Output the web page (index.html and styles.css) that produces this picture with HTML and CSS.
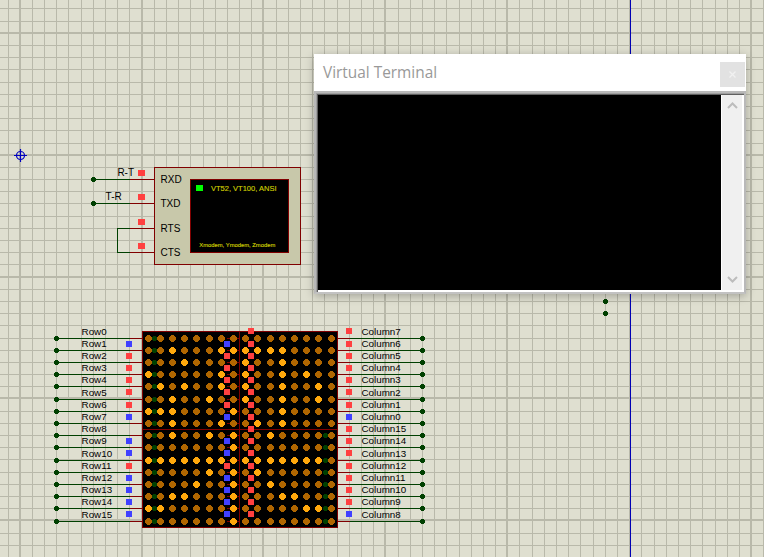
FILE: index.html
```html
<!DOCTYPE html>
<html lang="en">
<head>
<meta charset="utf-8">
<title>Virtual Terminal</title>
<link rel="stylesheet" href="styles.css">
</head>
<body>
<main class="workspace">
  <svg class="schematic" id="schematic" width="764" height="557" viewBox="0 0 764 557"></svg>
  <section class="window">
    <header class="titlebar">
      <h1 class="title">Virtual Terminal</h1>
      <button class="close" aria-label="Close"><svg width="9" height="9" viewBox="0 0 9 9"><path d="M1.5 1.5l6 6M7.5 1.5l-6 6"/></svg></button>
    </header>
    <div class="client">
      <div class="screen"></div>
      <div class="scrollbar">
        <svg width="11" height="9" viewBox="0 0 11 9"><path d="M1 7l4.5-4.5L10 7"/></svg>
        <svg width="11" height="9" viewBox="0 0 11 9"><path d="M1 2l4.5 4.5L10 2"/></svg>
      </div>
    </div>
  </section>
</main>
<script src="schematic.js"></script>
</body>
</html>
```
FILE: styles.css
```css
* { box-sizing: border-box; }
body { margin: 0; overflow: hidden; font-family: "Liberation Sans", Arial, sans-serif; }
.workspace { position: relative; width: 764px; height: 557px; overflow: hidden; background: #dfdfd0; }
.schematic { display: block; }
.schematic rect { shape-rendering: crispEdges; }
.grid { fill: #b9b9aa; }
.net { fill: #004000; }
.pin { fill: #800000; }
.guide { fill: #0000b4; }
.high { fill: #ff4040; }
.low { fill: #4040ff; }
.led { fill: #b06600; }
.lit { fill: #ffa80c; }
.panel { fill: #000; stroke: #800000; }
.device { fill: #c8c8aa; stroke: #800000; }
.active { fill: #00ff00; }
.origin { fill: none; stroke: #0000c0; stroke-width: 1.2; }
.label { fill: #000; font-size: 9.8px; }
.pinname { fill: #000; font-size: 10px; }
.crt { fill: #d2d200; stroke: #c8c800; stroke-width: .15px; font-size: 7.6px; }
.crt-small { fill: #d2d200; stroke: #c8c800; stroke-width: .15px; font-size: 6.2px; }

.window {
  position: absolute; left: 314px; top: 54px; width: 432px; height: 240px;
  display: flex; flex-direction: column; background: #fff;
  box-shadow: 0 2px 9px rgba(0, 0, 0, .28);
}
.titlebar { height: 37px; flex: none; display: flex; justify-content: space-between; align-items: flex-start; padding: 0 1px 0 9px; }
.title { margin: 0; font: 400 15.4px/38px "Open Sans", "Noto Sans", sans-serif; color: #999; }
.close { width: 25px; height: 25px; margin-top: 8px; padding: 0; border: 0; background: #e2e2e2; display: grid; place-items: center; }
.close path { stroke: #f1f1f1; stroke-width: 1.3; fill: none; }
.client { flex: 1; display: flex; border: 2px solid #b9b9b9; border-bottom-color: #c2c2c2; box-shadow: inset 1px 1px #a0a0a0, inset 2px 2px #606060, inset -1px -1px #fff; padding: 2px; }
.screen { flex: 1; background: #000; }
.scrollbar { width: 21px; background: #f0f0f0; border-left: 1px solid #fff; display: flex; flex-direction: column; justify-content: space-between; align-items: center; padding: 6px 0; }
.scrollbar path { fill: none; stroke: #bdbdbd; stroke-width: 2; }
```
FILE: schematic.js
```js
const NS = 'http://www.w3.org/2000/svg';
const root = document.getElementById('schematic');

function add(tag, cls, attrs, text) {
  const el = document.createElementNS(NS, tag);
  el.setAttribute('class', cls);
  for (const k in attrs) el.setAttribute(k, attrs[k]);
  if (text) el.textContent = text;
  root.appendChild(el);
}
const rect = (cls, x, y, width, height) => add('rect', cls, { x, y, width, height });
const label = (cls, x, y, text, textLength) =>
  add('text', cls, textLength ? { x, y, textLength, lengthAdjust: 'spacingAndGlyphs' } : { x, y }, text);
function node(x, y) {
  rect('net', x - 1, y - 2, 3, 5);
  rect('net', x - 2, y - 1, 5, 3);
}
function led(cls, x, y) {
  rect(cls, x - 1, y - 3, 3, 7);
  rect(cls, x - 2, y - 2, 5, 5);
  rect(cls, x - 3, y - 1, 7, 3);
}

// Grid: every tenth line is heavy; the guide replaces the one at x = 629
for (let k = -13; k < 62; k++) {
  const x = Math.floor(20.19 + 12.19 * k);
  const y = Math.floor(155.19 + 12.19 * k);
  const heavy = k % 10 === 0 ? 1 : 0;
  const heavyX = k === 50 ? 0 : heavy;
  rect('grid', x - heavyX, 0, 1 + heavyX, 557);
  rect('grid', 0, y - heavy, 764, 1 + heavy);
}
rect('guide', 630, 0, 1, 557);
add('path', 'origin', { d: 'M14 155.5h13M20.5 149v13' });
add('circle', 'origin', { cx: 20.5, cy: 155.5, r: 4 });
node(605, 301);
node(605, 313);

// Terminal device
rect('device', 154.5, 167.5, 146, 97);
rect('panel', 190.5, 179.5, 98, 73);
rect('active', 196, 185, 7, 6);
label('crt', 211, 191.3, 'VT52, VT100, ANSI', 65.5);
label('crt-small', 199.3, 247, 'Xmodem, Ymodem, Zmodem', 76);
[['RXD', 179], ['TXD', 203], ['RTS', 228], ['CTS', 252]].forEach(([name, y], i) => {
  const start = i < 2 ? 93 : 117;
  rect('net', start, y, 130 - start, 1);
  rect('pin', 130, y, 24, 1);
  rect('high', 138, y - 9, 7, 6);
  label('pinname', 160.5, y + 4, name);
});
rect('net', 117, 228, 1, 25);
node(93, 179);
node(93, 203);
label('pinname', 117.4, 176, 'R-T');
label('pinname', 105.6, 200, 'T-R');

// 16x16 LED matrix
const cols = [148, 160, 172, 184, 196, 209, 221, 233, 245, 257, 270, 282, 294, 306, 318, 331];
const rows = [338, 350, 362, 374, 386, 399, 411, 423, 435, 447, 460, 472, 484, 496, 508, 521];
const probes = [331, 344, 356, 368, 380, 392, 405, 417, 429, 441, 453, 466, 478, 490, 502, 514];
const columnOrder = [7, 6, 5, 4, 3, 2, 1, 0, 15, 14, 13, 12, 11, 10, 9, 8];
const rowState = '.brrrrrb.bbrbbbb';
const columnState = 'rrrrrrrbrrrrrrrb';
const bitmap = [
  '................',
  '..#...######....',
  '...#....#..#....',
  '#.....#.#..#.#..',
  '.#.#..#.#..#..#.',
  '..#..#..#..#..#.',
  '###....#...#....',
  '..#...#..#.#....',
  '..#..#.#..#.....',
  '.......#........',
  '###############.',
  '.....#.#.#......',
  '....#..#..#.....',
  '..##...#...##...',
  '##.....#.....##.',
  '.......#........'
];
function probe(x, y, s) {
  if (s !== '.') rect(s === 'r' ? 'high' : 'low', x - 3, y - 3, 6, 6);
}

rect('panel', 142.5, 331.5, 195, 196);
rect('pin', 239, 331, 1, 196);
rect('pin', 142, 429, 196, 1);
rows.forEach((y, r) => {
  rect('net', 56, y, 74, 1);
  rect('pin', 130, y, 12, 1);
  rect('pin', 338, y, 12, 1);
  rect('net', 350, y, 72, 1);
  node(56, y);
  node(422, y);
  label('label', 81.6, y - 3, 'Row' + r);
  label('label', 361.5, y - 3, 'Column' + columnOrder[r]);
  rect('pin', 227, y, 12, 1);
  node(154, y);
  if (r > 7) node(325, y);
  cols.forEach((x, c) => led(bitmap[r][c] === '#' ? 'lit' : 'led', x, y));
});
probes.forEach((y, r) => {
  probe(129, y, rowState[r]);
  probe(227, y, rowState[r]);
  probe(251, y, 'r');
  probe(349, y, columnState[r]);
});
```
